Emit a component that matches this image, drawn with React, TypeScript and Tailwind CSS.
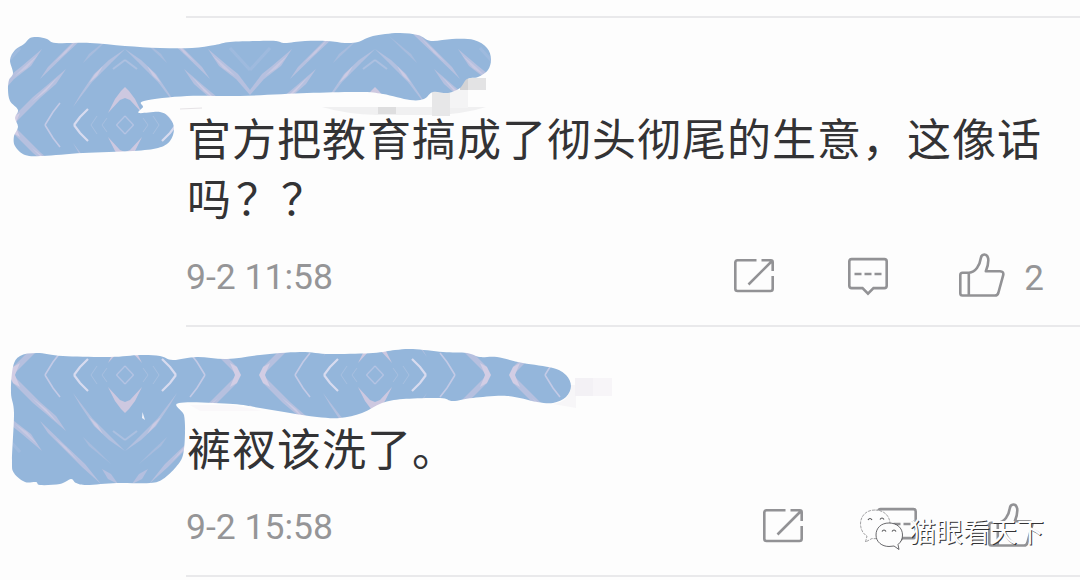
import type { ReactNode } from 'react';

type Point = [number, number];

interface Comment {
  id: string;
  text: ReactNode;
  time: string;
  likes?: number;
}

const COMMENTS: Comment[] = [
  { id: 'a', text: <>官方把教育搞成了彻头彻尾的生意，这像话吗<span className="pl-1">？？</span></>, time: '9-2 11:58', likes: 2 },
  { id: 'b', text: '裤衩该洗了。', time: '9-2 15:58' },
];

const BRUSH_TOP: Point[] = [
  [10, 60], [15, 50], [24, 44], [30, 38], [38, 37], [47, 39], [56, 43], [90, 43], [125, 46], [160, 48], [192, 48], [215, 45], [230, 42],
  [260, 41], [276, 41], [285, 43], [305, 41], [328, 41], [345, 43], [358, 42], [373, 36], [398, 33], [418, 35], [431, 41], [452, 39], [474, 40],
  [487, 48], [491, 59], [488, 70], [478, 77], [467, 79], [460, 88], [448, 93], [433, 92], [424, 99], [410, 100], [383, 94],
  [360, 92], [307, 93], [240, 96], [187, 96], [144, 101], [143, 107], [139, 113], [160, 112], [170, 118], [174, 129], [170, 141],
  [158, 148], [133, 151], [83, 153], [43, 156], [25, 155], [15, 146], [14, 136], [18, 127], [15, 118], [18, 110], [10, 101], [8, 90], [9, 80], [13, 73],
];

const BRUSH_BOTTOM: Point[] = [
  [13, 367], [20, 356], [37, 353], [63, 356], [110, 357], [140, 355], [160, 356], [173, 360], [197, 357], [227, 359], [260, 355],
  [300, 352], [330, 354], [373, 353], [395, 350], [413, 349], [443, 352], [467, 353], [480, 357], [497, 357], [523, 363], [553, 368], [566, 375],
  [571, 386], [566, 397], [553, 403], [537, 402], [507, 396], [473, 398], [453, 401], [440, 398], [403, 399], [382, 403],
  [362, 413], [340, 418], [317, 417], [290, 413], [260, 408], [233, 404], [179, 403], [184, 415], [185, 433], [183, 455], [176, 467], [163, 479],
  [150, 483], [117, 483], [87, 485], [76, 483], [71, 479], [60, 484], [40, 485], [36, 482], [25, 482], [14, 473], [12, 460], [14, 413], [11, 393],
];

// closed Catmull-Rom curve through the given points
function smooth(pts: Point[]) {
  const n = pts.length;
  let d = `M${pts[0][0]} ${pts[0][1]}`;
  for (let i = 0; i < n; i++) {
    const p0 = pts[(i - 1 + n) % n];
    const p1 = pts[i];
    const p2 = pts[(i + 1) % n];
    const p3 = pts[(i + 2) % n];
    d += ` C${p1[0] + (p2[0] - p0[0]) / 6} ${p1[1] + (p2[1] - p0[1]) / 6} ${p2[0] - (p3[0] - p1[0]) / 6} ${p2[1] - (p3[1] - p1[1]) / 6} ${p2[0]} ${p2[1]}`;
  }
  return d + 'Z';
}

// one quarter of the brush texture, mirrored on both axes by the pattern
function BrushQuarter() {
  return (
    <g id="brush-quarter">
      <g fill="#bcc2e0">
        <path d="M42 49 L31 66 L14 79 L0 95 L0 90 L12 74 L22 66Z" opacity=".85" />
        <path d="M66 69 L56 84 L40 98 L17 121 L12 125 L13 117 L33 97 L45 87Z" opacity=".85" />
        <path d="M101 16 L85 36 L66 54 L40 79 L48 67 L65 50 L82 33Z" opacity=".85" />
        <path d="M111 36 L98 49 L83 63 L89 54Z" opacity=".5" />
        <path d="M118 16 L111 26 L102 31 L108 21Z" opacity=".8" />
        <path d="M125 49 L112 62 L102 72 L92 82 L73 107 L80 95 L94 74 L109 60Z" opacity=".75" />
        <path d="M125 87 L125 98 L120 100 L108 113 L115 99 L121 91Z" fill="#cdc8e0" />
      </g>
      <g fill="#d2cde4">
        <path d="M38 55 L27 68 L15 76 L24 67Z" opacity=".6" />
        <path d="M58 77 L46 91 L32 102 L43 91Z" opacity=".75" />
        <path d="M78 39 L66 53 L55 62 L65 51Z" opacity=".6" />
        <path d="M103 66 L97 76 L89 83 L95 74Z" opacity=".8" />
        <path d="M20 113 L17 120 L15 125 L9 125 L13 117Z" />
      </g>
      <g fill="none" stroke="#c3cae6">
        <path d="M60 103 L53 112 L45 125" strokeWidth="1.6" />
        <path d="M88 109 L80 117 L74 125" stroke="#d8dbef" strokeWidth="2.2" />
        <path d="M97 116 L91 125 M107 118 L102 125" opacity=".4" />
        <path d="M125 116 L116.5 125" opacity=".65" strokeWidth="1.3" />
        <path d="M125 60 L113 69" opacity=".5" strokeWidth="2" />
        <path d="M0 70 L20 48" opacity=".22" strokeWidth="3" />
      </g>
    </g>
  );
}

function Redactions() {
  return (
    <svg className="pointer-events-none absolute inset-0" width="1080" height="580" viewBox="0 0 1080 580">
      <defs>
        <pattern id="brush" width="250" height="250" patternUnits="userSpaceOnUse">
          <rect width="250" height="250" fill="#94b6db" />
          <BrushQuarter />
          <use href="#brush-quarter" transform="translate(250 0) scale(-1 1)" />
          <use href="#brush-quarter" transform="translate(0 250) scale(1 -1)" />
          <use href="#brush-quarter" transform="translate(250 250) scale(-1 -1)" />
        </pattern>
      </defs>
      <path d="M322 107 H486 Q465 114 432 115 H378 Q345 114 322 107Z" fill="#f0f0f1" />
      <rect x="378" y="107" width="18" height="7" fill="#dededf" />
      <rect x="432" y="90" width="18" height="26" fill="#e7e7e8" />
      <rect x="450" y="90" width="18" height="18" fill="#f4f4f5" />
      <rect x="460" y="78" width="26" height="12" fill="#e3e3e4" />
      <rect x="460" y="78" width="8" height="12" fill="#d3d3d5" />
      <path d="M180 109 L202 108" stroke="#e6e3e6" />
      <path d="M553 404 Q570 402 571 385 H576 V408Z" fill="#f7f6f8" />
      <rect x="575" y="378" width="18" height="18" fill="#f3f1f5" />
      <rect x="593" y="378" width="19" height="18" fill="#f7f5f8" />
      <path d="M190 405 H233 L262 411 H200Z" fill="#faf8fa" />
      <path d={smooth(BRUSH_TOP)} fill="url(#brush)" />
      <path d={smooth(BRUSH_BOTTOM)} fill="url(#brush)" />
      <path d="M142.5 412 L145 420 L142 418Z" fill="#f0f2fa" />
    </svg>
  );
}

function ShareIcon() {
  return (
    <svg width="40" height="46" viewBox="0 0 40 46" fill="none" stroke="#929295" strokeWidth="2.6">
      <path d="M22.5 6.3 H3.6 Q1.3 6.3 1.3 8.6 V34.7 Q1.3 37 3.6 37 H36.4 Q38.7 37 38.7 34.7 V22" />
      <path d="M27.5 6.3 H36.8 Q38.7 6.3 38.7 8.2 V17 M38 7 L14.5 30.5" />
    </svg>
  );
}

function ReplyIcon() {
  return (
    <svg width="40" height="46" viewBox="0 0 40 46" fill="none" stroke="#929295" strokeWidth="2.6">
      <path d="M3.6 5.1 H36.4 Q38.7 5.1 38.7 7.4 V31.8 Q38.7 34.1 36.4 34.1 H25.5 L20 39.7 L14.5 34.1 H3.6 Q1.3 34.1 1.3 31.8 V7.4 Q1.3 5.1 3.6 5.1Z" />
      <path d="M6.5 20 H13.5 M16.5 20 H23.5 M26.5 20 H33.5" />
    </svg>
  );
}

function LikeIcon() {
  return (
    <svg className="overflow-visible" width="46" height="46" viewBox="0 0 46 46" fill="none" stroke="#929295" strokeWidth="2.6" strokeLinejoin="round">
      <path d="M10 18.7 H3.5 Q1.3 18.7 1.3 21 V39.2 Q1.3 41.5 3.5 41.5 H36 Q38.5 41.5 39.3 39 L44.2 21.2 Q45 17.4 41 17.2 H26.8 Q29.8 10.5 29.2 4.6 Q28.4 .4 25.3 .5 Q22.3 .7 21.8 4.2 C20.8 11.5 16.5 18.2 10 18.7Z" />
      <path d="M9.8 18.7 V41.5" />
    </svg>
  );
}

function Actions({ children, likes }: { children: ReactNode; likes?: number }) {
  return (
    <div className={likes ? 'flex items-center pr-9' : 'flex items-center pr-[46px]'}>
      {children}
      {likes && <span className="ml-[19px] pt-0.5 text-[35px] leading-none">{likes}</span>}
    </div>
  );
}

function CommentRow({ comment }: { comment: Comment }) {
  return (
    <article className="ml-[186px] border-b-2 border-[#e9e9eb]">
      <p className="w-[862px] pl-px text-[44px] leading-[60px] tracking-[1px] text-[#333335] font-['Noto_Sans_CJK_SC',sans-serif]">
        <span className="relative -top-px">{comment.text}</span>
      </p>
      <div className="mt-[26px] mb-[25px] flex h-[46px] items-center justify-between text-[#959597]">
        <time className="pt-0.5 text-[35.5px] leading-none">{comment.time}</time>
        <Actions likes={comment.likes}>
          <span className="mr-[74px]"><ShareIcon /></span>
          <span className="mr-[71px]"><ReplyIcon /></span>
          <LikeIcon />
        </Actions>
      </div>
    </article>
  );
}

function Watermark() {
  return (
    <div className="absolute left-[858px] top-[506px] flex items-center">
      <svg width="51" height="46" viewBox="0 0 51 46" fill="#fdfdfd" stroke="#8a8a8d" strokeWidth=".8">
        <path d="M17 3 C8 3 2.5 9 2.5 17 C2.5 22 5 27 9 29 L7.5 35 L14 31.5 C25 33 32 25 32 17 C32 9 26 3 17 3Z" strokeDasharray="3 1" />
        <path d="M31 16 C23 16 18 21 18 28 C18 35 24 39.5 31 39.5 L36 39 L41 42.5 L40 37.5 C43 35 44.5 32 44.5 28 C44.5 21 39 16 31 16Z" stroke="#444447" />
        <path d="M10 13 q2 -3 4 0 M22 12.5 q2 -3 4 0 M24 24.5 q2 -3 4 0 M34 24.5 q2 -3 4 0" fill="none" stroke="#555557" strokeWidth="1.2" />
      </svg>
      <span className="pt-0.5 text-[27px] leading-[46px] text-[#fdfdfd] font-['Noto_Sans_CJK_SC',sans-serif] [text-shadow:1px_1px_0_#333335]">猫眼看天下</span>
    </div>
  );
}

export default function App() {
  return (
    <main className="relative h-[580px] w-[1080px] overflow-hidden bg-[#fdfdfd] pt-4 font-[Roboto,sans-serif]">
      <div className="mb-[90px] ml-[186px] border-b-2 border-[#e9e9eb]" />
      <CommentRow comment={COMMENTS[0]} />
      <div className="h-[91px]" />
      <CommentRow comment={COMMENTS[1]} />
      <Redactions />
      <Watermark />
    </main>
  );
}
